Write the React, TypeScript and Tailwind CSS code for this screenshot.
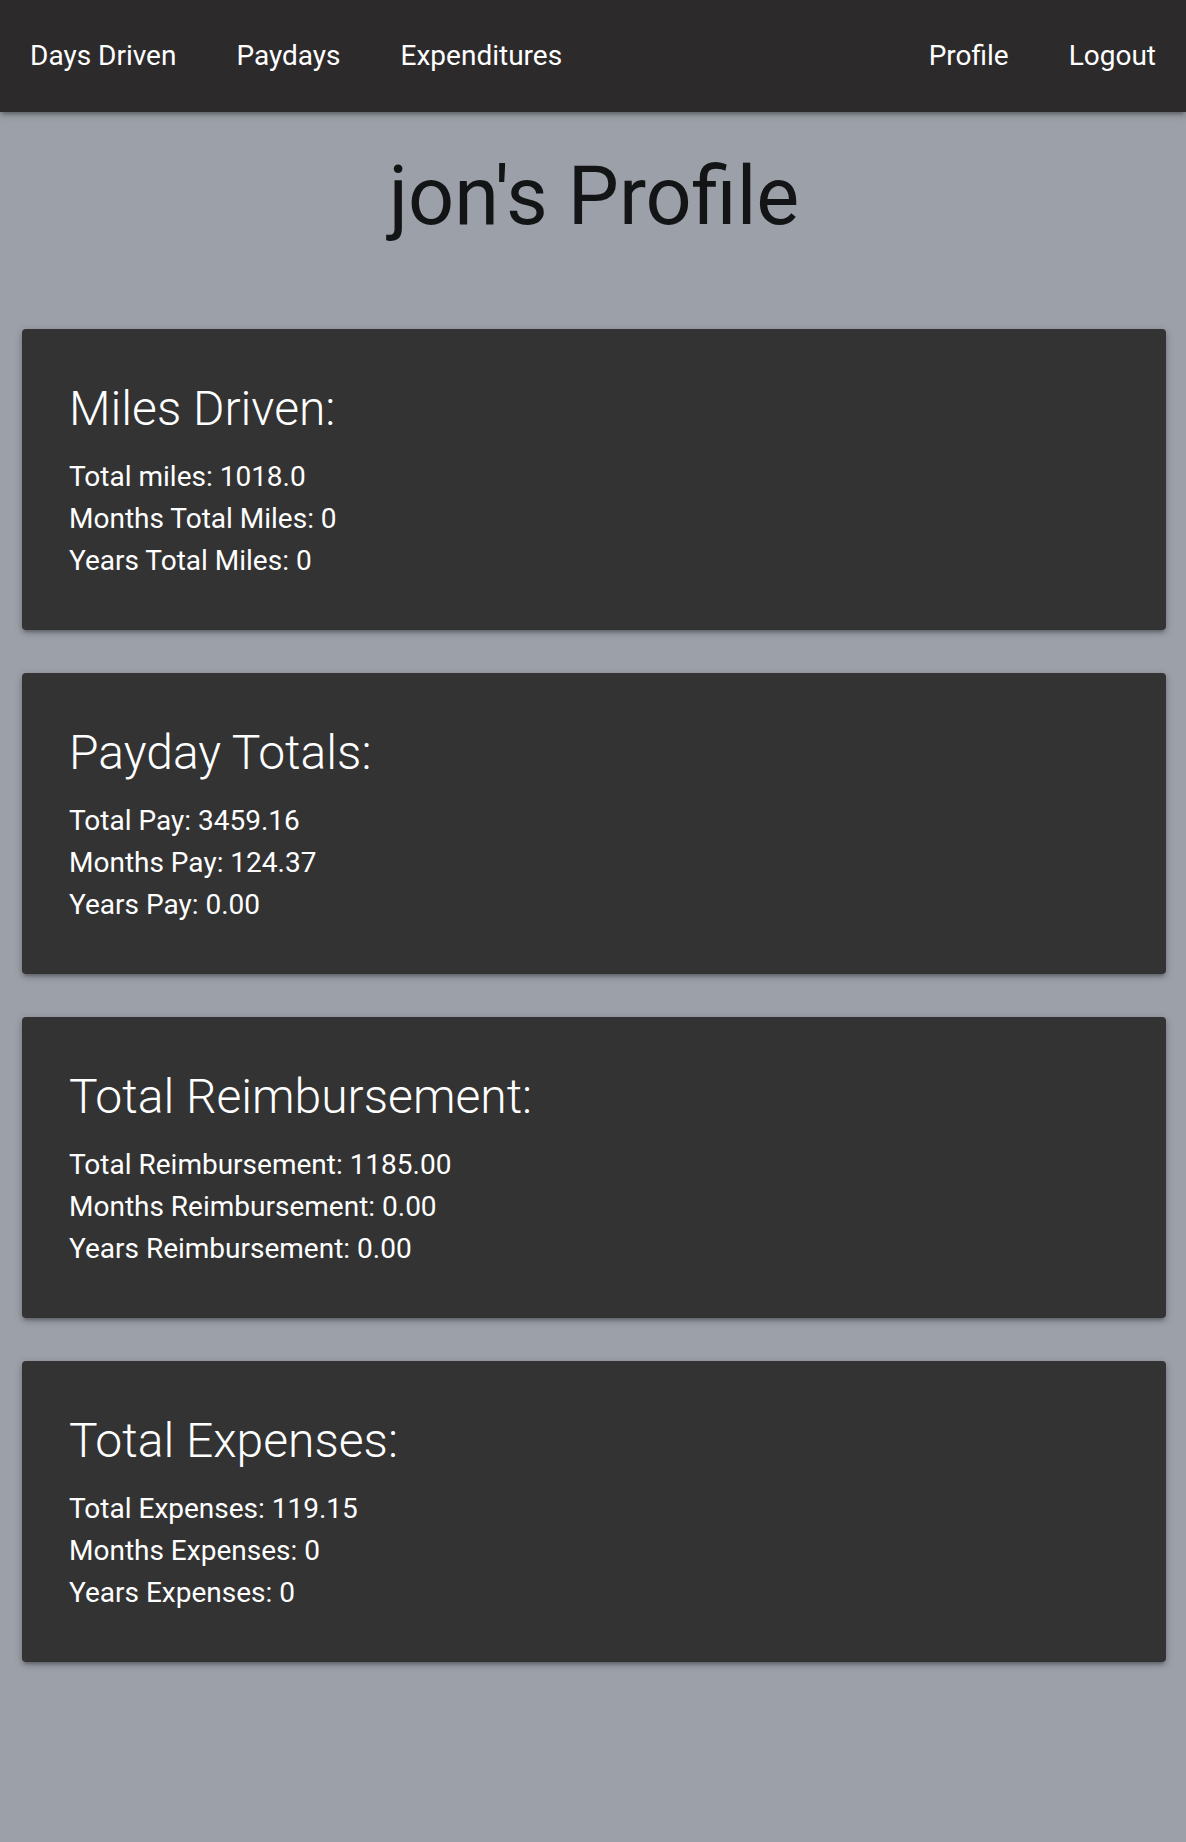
import React from "react";

const sections = [
  {
    title: "Miles Driven:",
    rows: ["Total miles: 1018.0", "Months Total Miles: 0", "Years Total Miles: 0"],
  },
  {
    title: "Payday Totals:",
    rows: ["Total Pay: 3459.16", "Months Pay: 124.37", "Years Pay: 0.00"],
  },
  {
    title: "Total Reimbursement:",
    rows: [
      "Total Reimbursement: 1185.00",
      "Months Reimbursement: 0.00",
      "Years Reimbursement: 0.00",
    ],
  },
  {
    title: "Total Expenses:",
    rows: ["Total Expenses: 119.15", "Months Expenses: 0", "Years Expenses: 0"],
  },
];

const NavLink = ({ label }: { label: string }) => (
  <li>
    <a href="#" className="block px-[30px] leading-[112px] text-white text-[28px]">
      {label}
    </a>
  </li>
);

export default function App() {
  return (
    <div className="min-h-[1842px] bg-[#9ca0a8] font-['Roboto',sans-serif]">
      <nav className="relative z-10 h-[112px] bg-[#2d2a2b] shadow-[0_3px_4px_0_rgba(0,0,0,0.14),0_5px_2px_-3px_rgba(0,0,0,0.12),0_2px_9px_0_rgba(0,0,0,0.2)]">
        <div className="flex justify-between">
          <ul className="flex">
            <NavLink label="Days Driven" />
            <NavLink label="Paydays" />
            <NavLink label="Expenditures" />
          </ul>
          <ul className="flex">
            <NavLink label="Profile" />
            <NavLink label="Logout" />
          </ul>
        </div>
      </nav>

      <main className="pl-[22px] pr-[20px] pt-[40px] pb-[60px]">
        <h1 className="text-center text-[81px] leading-[90px] text-[#131416] mb-[87px]">
          jon's Profile
        </h1>

        <div className="flex flex-col gap-[43px]">
          {sections.map((s) => (
            <div
              key={s.title}
              className="bg-[#333333] rounded-[4px] pl-[47px] pr-[42px] pt-[52px] pb-[48px] shadow-[0_3px_4px_0_rgba(0,0,0,0.14),0_5px_2px_-3px_rgba(0,0,0,0.12),0_2px_9px_0_rgba(0,0,0,0.2)]"
            >
              <h2 className="text-[48px] leading-[56px] font-light text-white">{s.title}</h2>
              <div className="mt-[19px]">
                {s.rows.map((r) => (
                  <p key={r} className="text-[28px] leading-[42px] text-white">
                    {r}
                  </p>
                ))}
              </div>
            </div>
          ))}
        </div>
      </main>
    </div>
  );
}
